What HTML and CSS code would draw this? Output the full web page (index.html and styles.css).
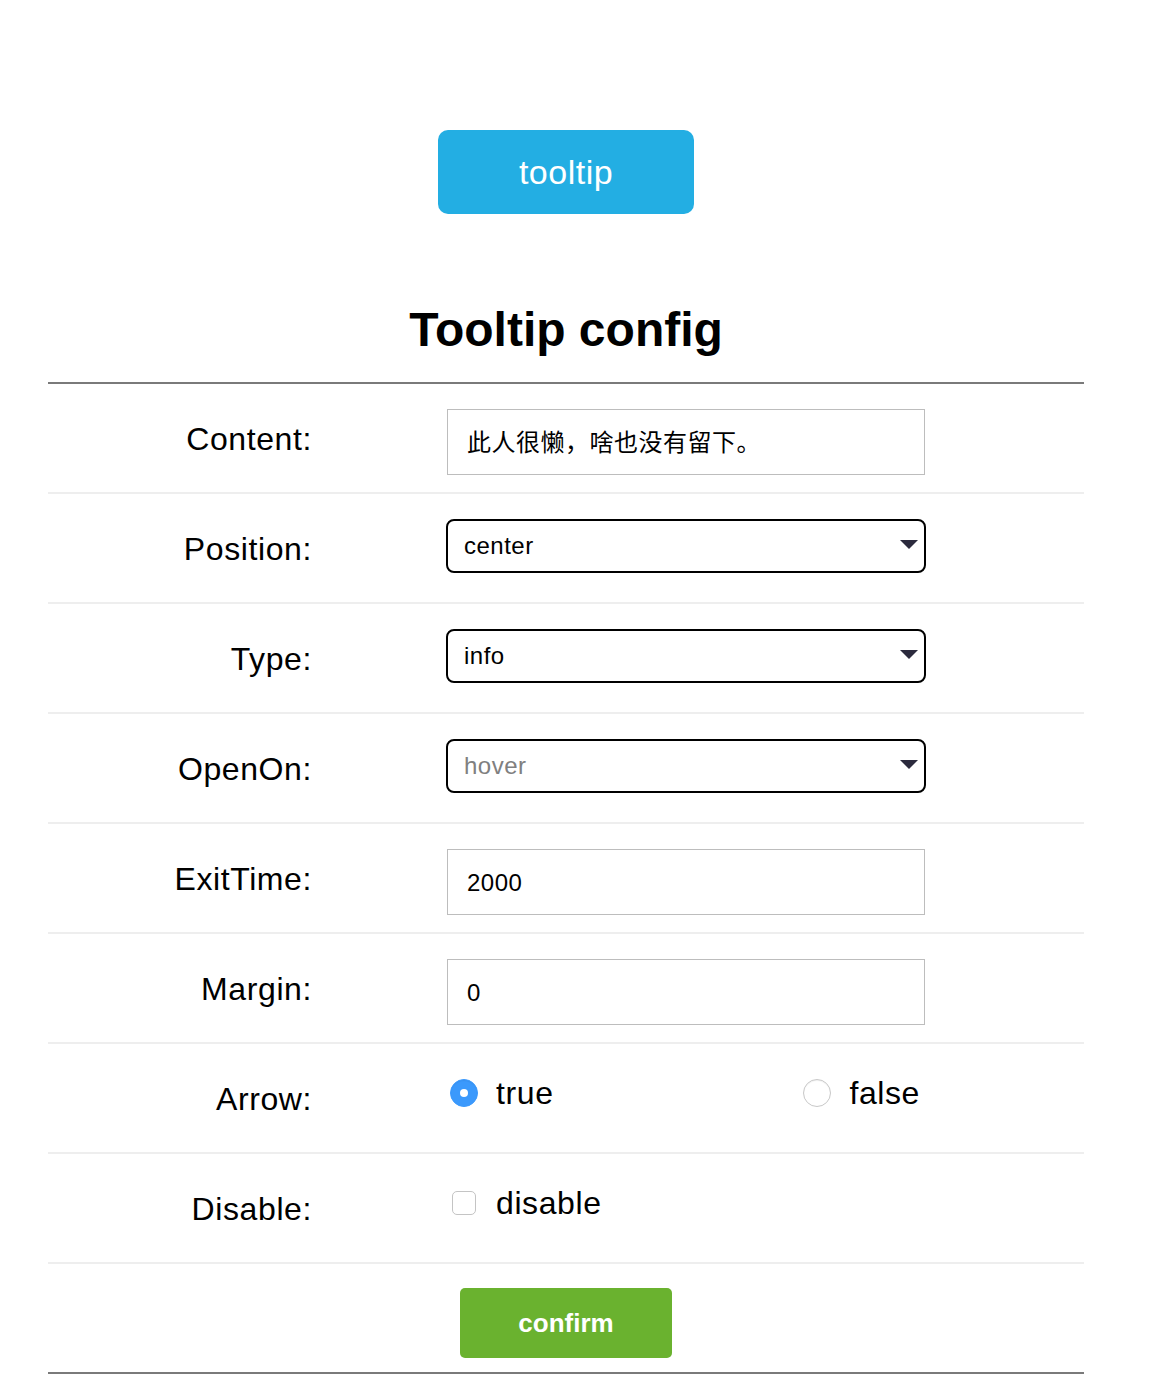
FILE: index.html
```html
<!DOCTYPE html>
<html lang="zh">
<head>
<meta charset="utf-8">
<link rel="stylesheet" href="styles.css">
</head>
<body>
<div class="page">
  <div class="top">
    <button class="tip-btn">tooltip</button>
  </div>
  <h1 class="title">Tooltip config</h1>
  <div class="form">
    <div class="row">
      <div class="label">Content:</div>
      <div class="ctrl"><div class="input">此人很懒，啥也没有留下。</div></div>
    </div>
    <div class="row">
      <div class="label">Position:</div>
      <div class="ctrl"><div class="select">center<span class="caret"></span></div></div>
    </div>
    <div class="row">
      <div class="label">Type:</div>
      <div class="ctrl"><div class="select">info<span class="caret"></span></div></div>
    </div>
    <div class="row">
      <div class="label">OpenOn:</div>
      <div class="ctrl"><div class="select muted">hover<span class="caret"></span></div></div>
    </div>
    <div class="row">
      <div class="label">ExitTime:</div>
      <div class="ctrl"><div class="input">2000</div></div>
    </div>
    <div class="row">
      <div class="label">Margin:</div>
      <div class="ctrl"><div class="input">0</div></div>
    </div>
    <div class="row">
      <div class="label">Arrow:</div>
      <div class="ctrl radios">
        <label class="opt"><span class="radio on"></span>true</label>
        <label class="opt"><span class="radio"></span>false</label>
      </div>
    </div>
    <div class="row">
      <div class="label">Disable:</div>
      <div class="ctrl raised"><label class="opt"><span class="check"></span>disable</label></div>
    </div>
    <div class="row last">
      <button class="confirm">confirm</button>
    </div>
  </div>
</div>
</body>
</html>
```
FILE: styles.css
```css
html, body {
  margin: 0;
  padding: 0;
  background: #fff;
}
body {
  font-family: "Liberation Sans", "Noto Sans CJK SC", sans-serif;
  color: #000;
}
.page {
  width: 1036px;
  margin-left: 48px;
  padding-top: 130px;
}
.top {
  display: flex;
  justify-content: center;
}
.tip-btn {
  width: 256px;
  height: 84px;
  background: #23aee3;
  border: none;
  border-radius: 10px;
  color: #fff;
  font-family: "Liberation Sans", sans-serif;
  font-size: 34px;
  letter-spacing: 0.5px;
  padding: 0;
}
.title {
  margin: 86px 0 0;
  height: 60px;
  line-height: 60px;
  font-size: 48px;
  font-weight: bold;
  text-align: center;
  border-bottom: 2px solid #7a7a7a;
  padding-bottom: 22px;
}
.form {
  border-bottom: 2px solid #7a7a7a;
}
.row {
  height: 108px;
  border-bottom: 2px solid #eeeeee;
  display: flex;
  align-items: center;
}
.row.last {
  border-bottom: none;
  justify-content: center;
  align-items: flex-start;
}
.label {
  width: 264px;
  text-align: right;
  font-size: 32px;
  letter-spacing: 0.6px;
  flex: none;
  margin-top: 2px;
}
.ctrl {
  margin-left: 134px;
  width: 480px;
  flex: none;
}
.input {
  margin-left: 1px;
  width: 476px;
  height: 64px;
  border: 1px solid #bdbdbd;
  font-size: 24px;
  letter-spacing: 0.5px;
  line-height: 66px;
  text-indent: 19px;
  margin-top: 8px;
}
.select {
  position: relative;
  height: 50px;
  border: 2px solid #000;
  border-radius: 8px;
  font-size: 24px;
  letter-spacing: 0.5px;
  line-height: 50px;
  padding-left: 16px;
  margin-top: -4px;
}
.select.muted {
  color: #808080;
}
.caret {
  position: absolute;
  right: 6px;
  top: 19px;
  width: 0;
  height: 0;
  border-left: 9px solid transparent;
  border-right: 9px solid transparent;
  border-top: 9px solid #2b2a3d;
}
.radios {
  display: flex;
  justify-content: space-between;
  padding-right: 6px;
  box-sizing: border-box;
  margin-top: -10px;
}
.raised {
  margin-top: -10px;
}
.opt {
  display: flex;
  align-items: center;
  font-size: 32px;
  letter-spacing: 0.6px;
  gap: 18px;
}
.radio {
  width: 28px;
  height: 28px;
  border-radius: 50%;
  border: 1px solid #c8c8c8;
  box-sizing: border-box;
  margin-left: 4px;
  background: #fff;
  box-shadow: inset 0 1px 1px rgba(0,0,0,0.06);
}
.radio.on {
  background: #3b99fc;
  border-color: #3b99fc;
  display: flex;
  align-items: center;
  justify-content: center;
}
.radio.on::after {
  content: "";
  width: 8px;
  height: 8px;
  border-radius: 50%;
  background: #fff;
}
.check {
  width: 24px;
  height: 24px;
  border: 1px solid #c4c4c4;
  border-radius: 5px;
  box-sizing: border-box;
  margin-left: 6px;
  margin-right: 2px;
  background: #fff;
}
.confirm {
  margin-top: 24px;
  width: 212px;
  height: 70px;
  background: #6ab22f;
  border: none;
  border-radius: 5px;
  color: #fff;
  font-family: "Liberation Sans", sans-serif;
  font-weight: bold;
  font-size: 26px;
  padding: 0;
}
```
